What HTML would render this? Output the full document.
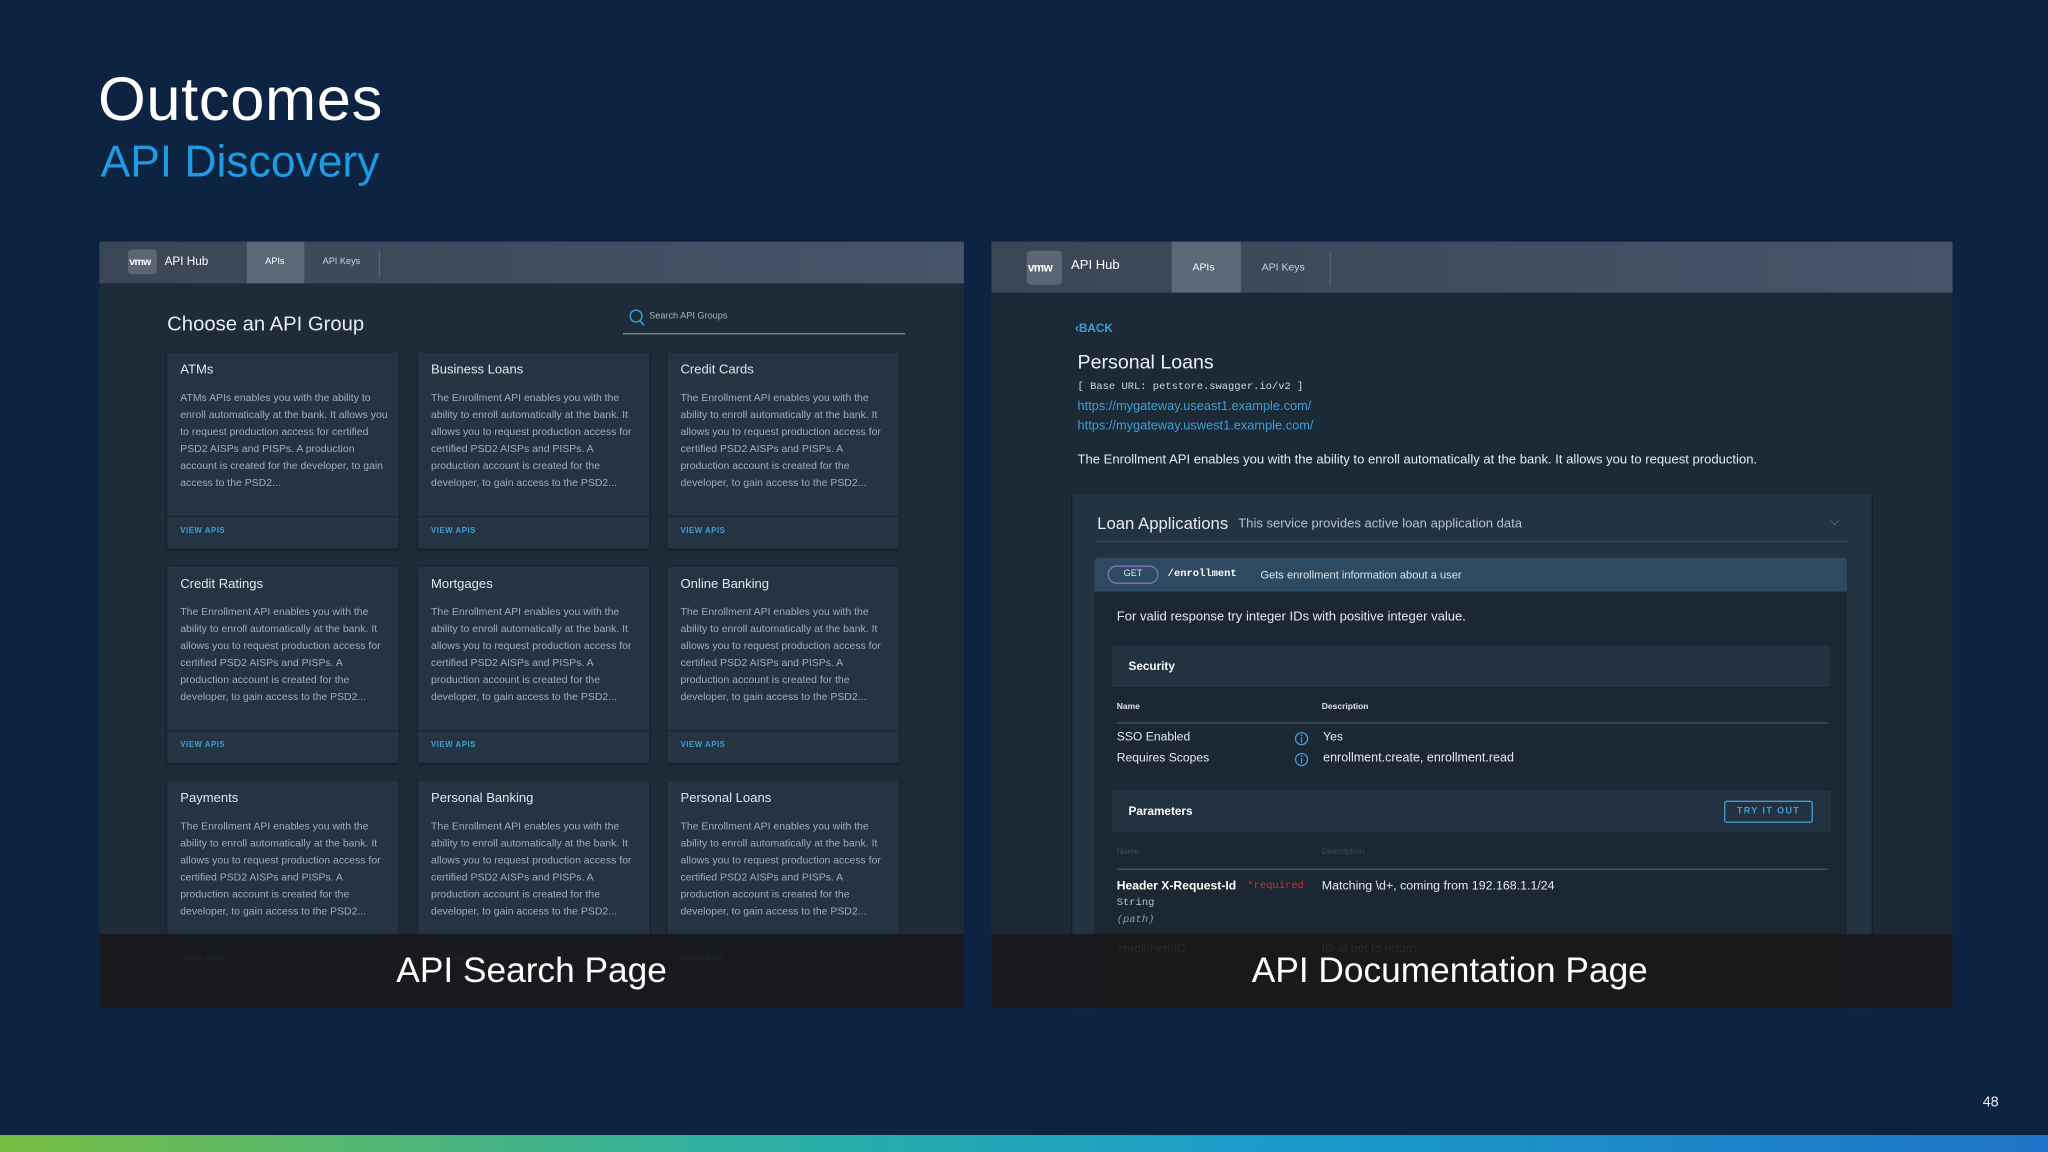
<!DOCTYPE html>
<html><head><meta charset="utf-8"><style>
*{margin:0;padding:0;box-sizing:border-box}
html,body{width:2048px;height:1152px;overflow:hidden;background:#0c2342}
#s{position:absolute;left:0;top:0;width:1568px;height:882px;transform:scale(1.306122);transform-origin:0 0;font-family:"Liberation Sans",sans-serif;color:#dde3ea}
.a{position:absolute;white-space:nowrap}
.panel{position:absolute;overflow:hidden}
.hdr{position:absolute;left:0;top:0;right:0;background:linear-gradient(90deg,#3a4655,#475468)}
.logo{position:absolute;background:#5a6676;border-radius:3px;color:#fff;font-weight:bold;letter-spacing:-0.5px}
.card{position:absolute;width:177px;height:150px;background:#243443;box-shadow:0 1px 2px rgba(0,0,0,.4)}
.card h4{position:absolute;left:10px;top:8px;font-weight:normal;font-size:10px;color:#e2e7ec}
.card p{position:absolute;left:10px;top:28px;width:162px;font-size:8px;line-height:13px;color:#a3adb7}
.card .f{position:absolute;left:0;right:0;top:125px;border-top:1px solid #1a2632}
.card .v{position:absolute;left:10px;top:134px;font-size:6px;font-weight:bold;color:#3e9fd3;letter-spacing:.4px}
.cap{position:absolute;left:0;right:0;bottom:0;height:57px;background:rgba(25,25,27,.93);text-align:center;font-size:27px;color:#fff;line-height:57px}
.mono{font-family:"Liberation Mono",monospace}
</style></head><body><div id="s">
<div class="a" style="left:75px;top:48px;font-size:47px;color:#fff;letter-spacing:.5px">Outcomes</div>
<div class="a" style="left:77px;top:105px;font-size:34px;color:#1e9be2">API Discovery</div>

<!-- left panel -->
<div class="panel" style="left:76px;top:185px;width:662px;height:587px;background:#1e2b38">
 <div class="hdr" style="height:32px">
  <div class="logo" style="left:22px;top:6px;width:22px;height:19px;font-size:8px;line-height:19px;padding-left:1px">vmw</div>
  <div class="a" style="left:50px;top:10px;font-size:9px;color:#fff">API Hub</div>
  <div class="a" style="left:113px;top:0;width:44px;height:32px;background:#5b6878"></div>
  <div class="a" style="left:127px;top:12px;font-size:7px;color:#fff">APIs</div>
  <div class="a" style="left:171px;top:12px;font-size:7px;color:#cdd4dc">API Keys</div>
  <div class="a" style="left:214px;top:6px;width:1px;height:22px;background:#55626f"></div>
 </div>
 <div class="a" style="left:52px;top:55px;font-size:15.5px;color:#e8edf1">Choose an API Group</div>
 <svg class="a" style="left:405px;top:51px" width="13" height="14"><circle cx="6" cy="6" r="4.5" fill="none" stroke="#3e9fd3" stroke-width="1.1"/><line x1="9" y1="9.5" x2="12" y2="13" stroke="#3e9fd3" stroke-width="1.1"/></svg>
 <div class="a" style="left:421px;top:54px;font-size:7px;color:#aab4be">Search API Groups</div>
 <div class="a" style="left:401px;top:70px;width:216px;height:1px;background:#7d8894"></div>

 <div class="card" style="left:52px;top:85px"><h4>ATMs</h4><p>ATMs APIs enables you with the ability to enroll automatically at the bank. It allows you to request production access for certified PSD2 AISPs and PISPs. A production account is created for the developer, to gain access to the PSD2...</p><div class="f"></div><div class="v">VIEW APIS</div></div>
 <div class="card" style="left:244px;top:85px"><h4>Business Loans</h4><p>The Enrollment API enables you with the ability to enroll automatically at the bank. It allows you to request production access for certified PSD2 AISPs and PISPs. A production account is created for the developer, to gain access to the PSD2...</p><div class="f"></div><div class="v">VIEW APIS</div></div>
 <div class="card" style="left:435px;top:85px"><h4>Credit Cards</h4><p>The Enrollment API enables you with the ability to enroll automatically at the bank. It allows you to request production access for certified PSD2 AISPs and PISPs. A production account is created for the developer, to gain access to the PSD2...</p><div class="f"></div><div class="v">VIEW APIS</div></div>
 <div class="card" style="left:52px;top:249px"><h4>Credit Ratings</h4><p>The Enrollment API enables you with the ability to enroll automatically at the bank. It allows you to request production access for certified PSD2 AISPs and PISPs. A production account is created for the developer, to gain access to the PSD2...</p><div class="f"></div><div class="v">VIEW APIS</div></div>
 <div class="card" style="left:244px;top:249px"><h4>Mortgages</h4><p>The Enrollment API enables you with the ability to enroll automatically at the bank. It allows you to request production access for certified PSD2 AISPs and PISPs. A production account is created for the developer, to gain access to the PSD2...</p><div class="f"></div><div class="v">VIEW APIS</div></div>
 <div class="card" style="left:435px;top:249px"><h4>Online Banking</h4><p>The Enrollment API enables you with the ability to enroll automatically at the bank. It allows you to request production access for certified PSD2 AISPs and PISPs. A production account is created for the developer, to gain access to the PSD2...</p><div class="f"></div><div class="v">VIEW APIS</div></div>
 <div class="card" style="left:52px;top:413px"><h4>Payments</h4><p>The Enrollment API enables you with the ability to enroll automatically at the bank. It allows you to request production access for certified PSD2 AISPs and PISPs. A production account is created for the developer, to gain access to the PSD2...</p><div class="f"></div><div class="v">VIEW APIS</div></div>
 <div class="card" style="left:244px;top:413px"><h4>Personal Banking</h4><p>The Enrollment API enables you with the ability to enroll automatically at the bank. It allows you to request production access for certified PSD2 AISPs and PISPs. A production account is created for the developer, to gain access to the PSD2...</p><div class="f"></div><div class="v">VIEW APIS</div></div>
 <div class="card" style="left:435px;top:413px"><h4>Personal Loans</h4><p>The Enrollment API enables you with the ability to enroll automatically at the bank. It allows you to request production access for certified PSD2 AISPs and PISPs. A production account is created for the developer, to gain access to the PSD2...</p><div class="f"></div><div class="v">VIEW APIS</div></div>
 <div class="cap">API Search Page</div>
</div>

<!-- right panel -->
<div class="panel" style="left:759px;top:185px;width:736px;height:587px;background:#1c2a37">
 <div class="hdr" style="height:39px">
  <div class="logo" style="left:27px;top:7px;width:27px;height:26px;font-size:9px;line-height:26px;padding-left:1px">vmw</div>
  <div class="a" style="left:61px;top:13px;font-size:10px;color:#fff">API Hub</div>
  <div class="a" style="left:138px;top:0;width:53px;height:39px;background:#5b6878"></div>
  <div class="a" style="left:154px;top:15px;font-size:8px;color:#fff">APIs</div>
  <div class="a" style="left:207px;top:15px;font-size:8px;color:#cdd4dc">API Keys</div>
  <div class="a" style="left:259px;top:8px;width:1px;height:26px;background:#55626f"></div>
 </div>
 <div class="a" style="left:64px;top:61px;font-size:9px;font-weight:bold;color:#3e9fd3">‹BACK</div>
 <div class="a" style="left:66px;top:84px;font-size:15px;color:#eef1f4">Personal Loans</div>
 <div class="a mono" style="left:66px;top:107px;font-size:8px;color:#cfd6dc">[ Base URL: petstore.swagger.io/v2 ]</div>
 <div class="a" style="left:66px;top:121px;font-size:9.8px;color:#3e9fd3">https://mygateway.useast1.example.com/</div>
 <div class="a" style="left:66px;top:136px;font-size:9.8px;color:#3e9fd3">https://mygateway.uswest1.example.com/</div>
 <div class="a" style="left:66px;top:162px;font-size:10px;color:#e6eaee">The Enrollment API enables you with the ability to enroll automatically at the bank. It allows you to request production.</div>
 <div class="a" style="left:61px;top:192px;width:614px;height:400px;background:#223342;border:1px solid #16212b"></div>
 <div class="a" style="left:81px;top:208px;font-size:12.8px;color:#e6eaee">Loan Applications</div>
 <div class="a" style="left:189px;top:211px;font-size:10px;color:#b8c2cb">This service provides active loan application data</div>
 <div class="a" style="left:642px;top:209px;font-size:9px;color:#7d8894">⌵</div>
 <div class="a" style="left:81px;top:229px;width:574px;height:1px;background:#3b4a58"></div>
 <div class="a" style="left:79px;top:242px;width:576px;height:360px;background:#1b2733"></div>
 <div class="a" style="left:79px;top:242px;width:576px;height:26px;background:#2e4a62;border-radius:2px 2px 0 0"></div>
 <div class="a" style="left:89px;top:248px;width:39px;height:14px;border:1px solid #8a6fc0;border-radius:8px;font-size:7px;color:#dfe4ea;text-align:center;line-height:12px">GET</div>
 <div class="a mono" style="left:135px;top:250px;font-size:8px;font-weight:bold;color:#fff">/enrollment</div>
 <div class="a" style="left:206px;top:250px;font-size:8.5px;color:#dfe4ea">Gets enrollment information about a user</div>
 <div class="a" style="left:96px;top:282px;font-size:10px;color:#e6eaee">For valid response try integer IDs with positive integer value.</div>
 <div class="a" style="left:92px;top:309px;width:550px;height:32px;background:#223240"></div>
 <div class="a" style="left:105px;top:320px;font-size:9px;font-weight:bold;color:#fff">Security</div>
 <div class="a" style="left:96px;top:353px;font-size:6.5px;font-weight:bold;color:#dfe4ea">Name</div>
 <div class="a" style="left:253px;top:353px;font-size:6.5px;font-weight:bold;color:#dfe4ea">Description</div>
 <div class="a" style="left:96px;top:368px;width:545px;height:1px;background:#4a5866"></div>
 <div class="a" style="left:96px;top:374px;font-size:9.3px;color:#e6eaee">SSO Enabled</div>
 <div class="a" style="left:96px;top:390px;font-size:9.3px;color:#e6eaee">Requires Scopes</div>
 <svg class="a" style="left:232px;top:375px" width="11" height="11"><circle cx="5.5" cy="5.5" r="4.6" fill="none" stroke="#3e9fd3"/><line x1="5.5" y1="4.5" x2="5.5" y2="8.5" stroke="#3e9fd3"/><circle cx="5.5" cy="3" r=".7" fill="#3e9fd3"/></svg>
 <svg class="a" style="left:232px;top:391px" width="11" height="11"><circle cx="5.5" cy="5.5" r="4.6" fill="none" stroke="#3e9fd3"/><line x1="5.5" y1="4.5" x2="5.5" y2="8.5" stroke="#3e9fd3"/><circle cx="5.5" cy="3" r=".7" fill="#3e9fd3"/></svg>
 <div class="a" style="left:254px;top:374px;font-size:9.3px;color:#e6eaee">Yes</div>
 <div class="a" style="left:254px;top:390px;font-size:9.6px;color:#e6eaee">enrollment.create, enrollment.read</div>
 <div class="a" style="left:92px;top:420px;width:551px;height:32px;background:#223240"></div>
 <div class="a" style="left:105px;top:431px;font-size:9px;font-weight:bold;color:#fff">Parameters</div>
 <div class="a" style="left:561px;top:428px;width:68px;height:17px;border:1px solid #3e9fd3;border-radius:2px;font-size:7px;font-weight:bold;color:#3e9fd3;letter-spacing:1px;text-align:center;line-height:15px">TRY IT OUT</div>
 <div class="a" style="left:96px;top:464px;font-size:6.5px;color:#3d4b58">Name</div>
 <div class="a" style="left:253px;top:464px;font-size:6.5px;color:#3d4b58">Description</div>
 <div class="a" style="left:96px;top:480px;width:545px;height:1px;background:#4a5866"></div>
 <div class="a" style="left:96px;top:488px;font-size:9.3px;font-weight:bold;color:#fff">Header X-Request-Id</div>
 <div class="a mono" style="left:196px;top:489px;font-size:8px;color:#c0392b">*required</div>
 <div class="a" style="left:253px;top:488px;font-size:9.5px;color:#e6eaee">Matching \d+, coming from 192.168.1.1/24</div>
 <div class="a mono" style="left:96px;top:502px;font-size:8px;color:#b8c2cb">String</div>
 <div class="a mono" style="left:96px;top:515px;font-size:8px;font-style:italic;color:#8f9ba6">(path)</div>
 <div class="a" style="left:96px;top:536px;font-size:9.3px;color:#e6eaee">enrollmentID</div>
 <div class="a" style="left:253px;top:536px;font-size:9.3px;color:#e6eaee">ID of pet to return</div>
 <div class="cap" style="padding-right:34px">API Documentation Page</div>
</div>

<div class="a" style="left:1518px;top:838px;font-size:11px;color:#e6eaee">48</div>
<div class="a" style="left:0;top:869px;width:1568px;height:13px;background:linear-gradient(90deg,#78be43,#2fb0a0 35%,#1a9ec9 60%,#1e74c8)"></div>
</div></body></html>
